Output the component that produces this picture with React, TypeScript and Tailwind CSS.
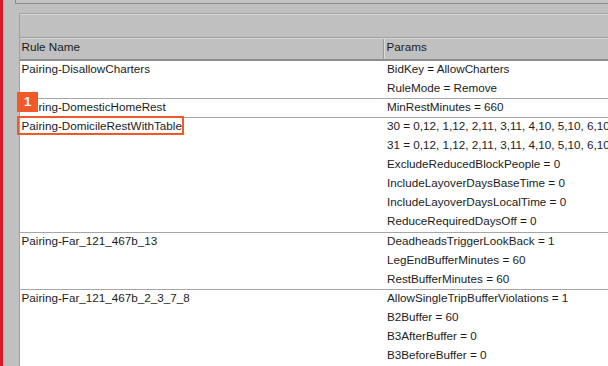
import React from 'react';

type Rule = { name: string; params: string[]; h: string };

const rules: Rule[] = [
  { name: 'Pairing-DisallowCharters', params: ['BidKey = AllowCharters', 'RuleMode = Remove'], h: 'h-[38px]' },
  { name: 'Pairing-DomesticHomeRest', params: ['MinRestMinutes = 660'], h: 'h-[19px]' },
  {
    name: 'Pairing-DomicileRestWithTable',
    params: [
      '30 = 0,12, 1,12, 2,11, 3,11, 4,10, 5,10, 6,10, 7,10',
      '31 = 0,12, 1,12, 2,11, 3,11, 4,10, 5,10, 6,10, 7,10',
      'ExcludeReducedBlockPeople = 0',
      'IncludeLayoverDaysBaseTime = 0',
      'IncludeLayoverDaysLocalTime = 0',
      'ReduceRequiredDaysOff = 0',
    ],
    h: 'h-[115px]',
  },
  {
    name: 'Pairing-Far_121_467b_13',
    params: ['DeadheadsTriggerLookBack = 1', 'LegEndBufferMinutes = 60', 'RestBufferMinutes = 60'],
    h: 'h-[57px]',
  },
  {
    name: 'Pairing-Far_121_467b_2_3_7_8',
    params: ['AllowSingleTripBufferViolations = 1', 'B2Buffer = 60', 'B3AfterBuffer = 0', 'B3BeforeBuffer = 0'],
    h: 'h-[90px]',
  },
];

export default function App() {
  return (
    <div className="relative flex w-[608px] h-[366px] overflow-hidden bg-[#c0c0c0] text-[11.7px] text-[#1c1c1c] font-['Liberation_Sans',Arial,sans-serif]">
      <div className="w-[3px] shrink-0 bg-[#d9182c]" />
      <div className="flex flex-1 flex-col min-w-0">
        {/* panel above the grid */}
        <div className="h-[4px] shrink-0 ml-[12px] border-l border-b border-[#8c8c8c] bg-[#c4c4c4]" />
        <div className="h-[9px] shrink-0" />

        {/* grid */}
        <div className="flex flex-1 flex-col ml-[16px] border-l border-t border-[#a2a2a2] w-[640px]">
          <div className="h-[24px] shrink-0 border-t border-[#dadada] border-b border-b-[#a0a0a0] bg-[#c0c0c0]" />
          <div className="flex h-[23px] shrink-0 border-t border-[#d6d6d6] border-b-2 border-b-[#8e8e8e] bg-[#c0c0c0] leading-[15px]">
            <div className="w-[364px] shrink-0 pl-[1.5px] border-r border-[#9a9a9a]">Rule Name</div>
            <div className="flex-1 pl-[1.5px] border-l border-[#dcdcdc]">Params</div>
          </div>

          <div className="flex-1 bg-white">
            {rules.map((r) => (
              <div
                key={r.name}
                className={`flex ${r.h} shrink-0 box-border overflow-hidden border-b border-[#a6a6a6] leading-[19px]`}
              >
                <div className="w-[365px] shrink-0 pl-[1.5px] -mt-[2px]">{r.name}</div>
                <div className="flex-1 pl-[2px] -mt-[2px] whitespace-nowrap">
                  {r.params.map((p) => (
                    <div key={p}>{p}</div>
                  ))}
                </div>
              </div>
            ))}
          </div>
        </div>
      </div>

      {/* callout */}
      <div className="absolute left-[17px] top-[116px] w-[167px] h-[19px] border-2 border-[#ef5a28]" />
      <div className="absolute left-[17px] top-[92px] w-[21px] h-[20px] bg-[#ef5a28] text-white font-bold text-[13px] leading-[20px] text-center">
        1
      </div>
    </div>
  );
}
